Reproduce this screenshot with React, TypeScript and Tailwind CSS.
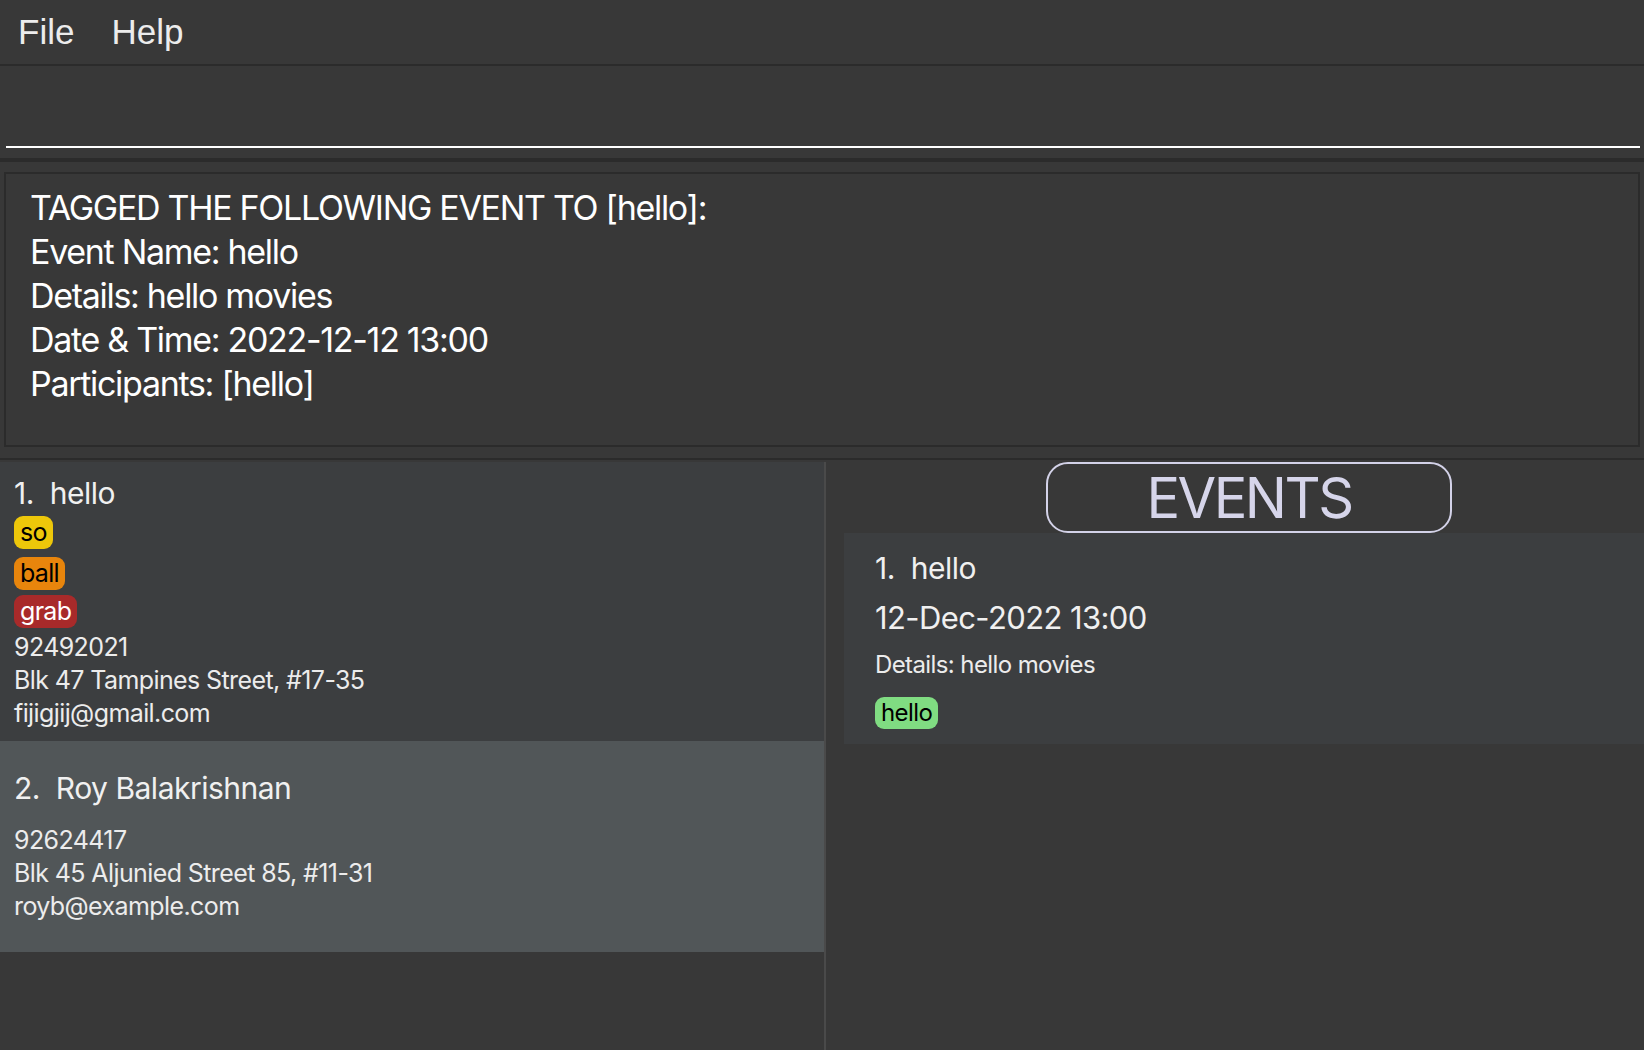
const persons = [
  {
    name: "hello",
    tags: [
      { label: "so", cls: "bg-[#edc70a] text-black", mt: "mt-0" },
      { label: "ball", cls: "bg-[#e8850c] text-black", mt: "mt-[8px]" },
      { label: "grab", cls: "bg-[#a82a2a] text-white", mt: "mt-[5px]" },
    ],
    phone: "92492021",
    address: "Blk 47 Tampines Street, #17-35",
    email: "fijigjij@gmail.com",
    bg: "bg-[#3c3e40]",
  },
  {
    name: "Roy Balakrishnan",
    tags: [],
    phone: "92624417",
    address: "Blk 45 Aljunied Street 85, #11-31",
    email: "royb@example.com",
    bg: "bg-[#515658]",
  },
];

const result = [
  "TAGGED THE FOLLOWING EVENT TO [hello]:",
  "Event Name: hello",
  "Details: hello movies",
  "Date & Time: 2022-12-12 13:00",
  "Participants: [hello]",
];

function PersonCard({ p, index }: { p: (typeof persons)[number]; index: number }) {
  const hasTags = p.tags.length > 0;
  return (
    <div className={`${p.bg} px-[14px] ${hasTags ? "pt-[13px] pb-[11px]" : "pt-[29px] pb-[29px]"}`}>
      <div className="text-[30px] leading-[36px] tracking-[-0.5px] text-[#f0f0f0]">
        {index + 1}.&nbsp;&nbsp;{p.name}
      </div>
      {hasTags && (
        <div className="flex flex-col items-start mt-[5px]">
          {p.tags.map((t) => (
            <span
              key={t.label}
              className={`${t.cls} ${t.mt} rounded-[9px] px-[6px] h-[33px] flex items-center text-[25px] tracking-[-0.7px]`}
            >
              {t.label}
            </span>
          ))}
        </div>
      )}
      <div className={`flex flex-col text-[25px] leading-[33px] tracking-[-0.6px] text-[#ececec] ${hasTags ? "mt-[3px]" : "mt-[18px]"}`}>
        <span>{p.phone}</span>
        <span>{p.address}</span>
        <span>{p.email}</span>
      </div>
    </div>
  );
}

export default function App() {
  return (
    <div
      className="w-full h-[1050px] bg-[#383838] flex flex-col overflow-hidden"
      style={{ fontFamily: "Inter, 'Noto Sans', sans-serif" }}
    >
      {/* menu */}
      <div className="h-[66px] border-b-2 border-[#2b2b2b] flex items-center gap-[37px] px-[18px] text-[35px] text-[#ececec]" style={{ fontFamily: "'Liberation Sans', Arial, sans-serif" }}>
        <span>File</span>
        <span>Help</span>
      </div>

      {/* command box */}
      <div className="h-[92px] px-[6px] pr-[4px]">
        <div className="h-[82px] border-b-2 border-white"></div>
      </div>
      <div className="h-[4px] bg-[#2b2b2b]"></div>

      {/* result display */}
      <div className="px-[4px] pt-[10px] pb-[11px]">
        <div className="h-[275px] border-2 border-[#2b2b2b] px-[24px] pt-[12px] text-[34px] leading-[44px] tracking-[-1.3px] text-white">
          {result.map((line) => (
            <div key={line}>{line}</div>
          ))}
        </div>
      </div>
      <div className="h-[2px] bg-[#2b2b2b]"></div>

      {/* lists */}
      <div className="flex-1 flex pt-[2px] min-h-0">
        <div className="w-[824px] flex flex-col">
          {persons.map((p, i) => (
            <PersonCard key={p.name} p={p} index={i} />
          ))}
        </div>
        <div className="w-[2px] bg-[#4a4a4a]"></div>
        <div className="flex-1 flex flex-col">
          <div className="flex justify-center pl-[28px]">
            <div className="w-[406px] h-[71px] border-2 border-[#d3d2e8] rounded-[22px] flex items-center justify-center text-[56px] tracking-[-2.5px] text-[#d6d5ea]">
              EVENTS
            </div>
          </div>
          <div className="ml-[18px] bg-[#3c3e40] pl-[31px] pt-[17px] pb-[15px] flex flex-col items-start">
            <div className="text-[30px] leading-[36px] tracking-[-0.5px] text-[#f0f0f0]">1.&nbsp;&nbsp;hello</div>
            <div className="mt-[14px] text-[31px] leading-[36px] tracking-[-0.6px] text-[#f0f0f0]">12-Dec-2022 13:00</div>
            <div className="mt-[14px] text-[24px] leading-[30px] tracking-[-0.6px] text-[#ececec]">Details: hello movies</div>
            <span className="mt-[17px] bg-[#80dc82] text-black rounded-[9px] px-[6px] h-[32px] flex items-center text-[24px] tracking-[-0.6px]">
              hello
            </span>
          </div>
        </div>
      </div>
    </div>
  );
}
